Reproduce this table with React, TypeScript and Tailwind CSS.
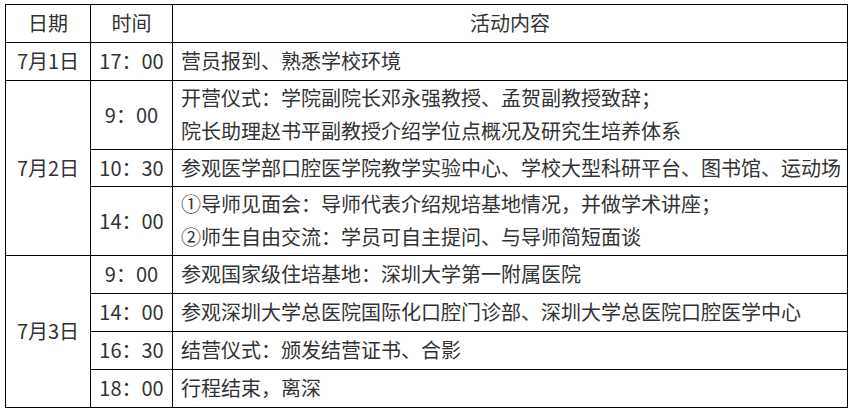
import React from "react";

const font = { fontFamily: '"Microsoft YaHei", "Noto Sans CJK SC", "Noto Sans", sans-serif' };

type Row = { time: string; lines: string[]; h: string };

const groups: { date: string; rows: Row[] }[] = [
  { date: "7月1日", rows: [{ time: "17：00", lines: ["营员报到、熟悉学校环境"], h: "h-[38px]" }] },
  {
    date: "7月2日",
    rows: [
      {
        time: "9：00",
        lines: ["开营仪式：学院副院长邓永强教授、孟贺副教授致辞；", "院长助理赵书平副教授介绍学位点概况及研究生培养体系"],
        h: "h-[69px]",
      },
      { time: "10：30", lines: ["参观医学部口腔医学院教学实验中心、学校大型科研平台、图书馆、运动场"], h: "h-[37px]" },
      {
        time: "14：00",
        lines: ["①导师见面会：导师代表介绍规培基地情况，并做学术讲座；", "②师生自由交流：学员可自主提问、与导师简短面谈"],
        h: "h-[69px]",
      },
    ],
  },
  {
    date: "7月3日",
    rows: [
      { time: "9：00", lines: ["参观国家级住培基地：深圳大学第一附属医院"], h: "h-[38px]" },
      { time: "14：00", lines: ["参观深圳大学总医院国际化口腔门诊部、深圳大学总医院口腔医学中心"], h: "h-[38px]" },
      { time: "16：30", lines: ["结营仪式：颁发结营证书、合影"], h: "h-[38px]" },
      { time: "18：00", lines: ["行程结束，离深"], h: "h-[38px]" },
    ],
  },
];

export default function App() {
  return (
    <div className="w-[854px] h-[414px] bg-white pl-[5px] pt-[4px]" style={font}>
      <table className="table-fixed border-collapse w-[843px] text-[20px] text-[#333333] leading-[33px]">
        <colgroup>
          <col className="w-[85px]" />
          <col className="w-[82px]" />
          <col />
        </colgroup>
        <tbody>
          <tr className="h-[38px]">
            <td className="border border-black text-center px-0 pt-0 pb-[2px]">日期</td>
            <td className="border border-black text-center px-0 pt-0 pb-[2px]">时间</td>
            <td className="border border-black text-center px-0 pt-0 pb-[2px]">活动内容</td>
          </tr>
          {groups.map((g) =>
            g.rows.map((r, i) => (
              <tr key={g.date + r.time} className={r.h}>
                {i === 0 && (
                  <td rowSpan={g.rows.length} className="border border-black text-center px-0 pt-0 pb-[2px] align-middle">
                    {g.date}
                  </td>
                )}
                <td className="border border-black text-center px-0 pt-0 pb-[2px] align-middle">{r.time}</td>
                <td className="border border-black pl-[8px] pr-0 pt-0 pb-[2px] align-middle whitespace-nowrap">
                  {r.lines.map((l) => (
                    <div key={l}>{l}</div>
                  ))}
                </td>
              </tr>
            ))
          )}
        </tbody>
      </table>
    </div>
  );
}
